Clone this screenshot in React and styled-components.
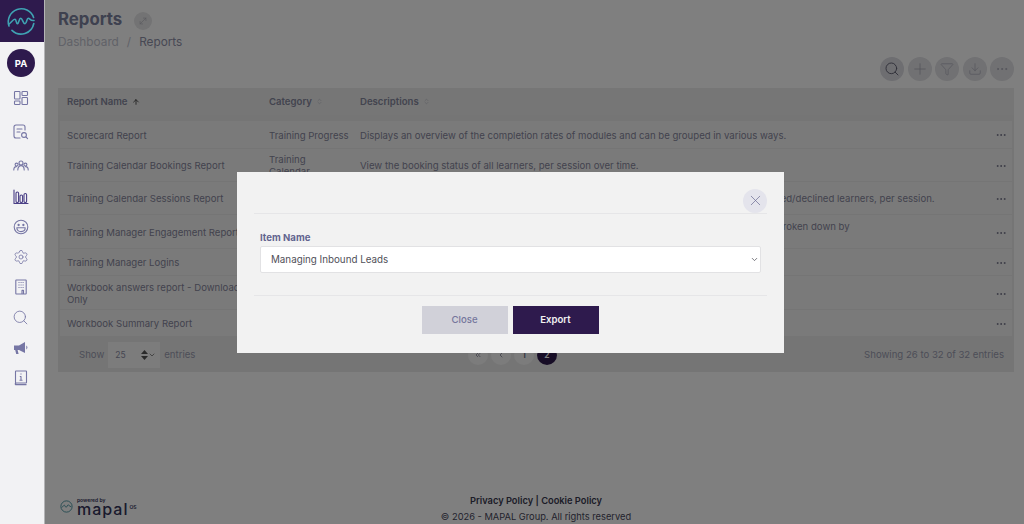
import React from 'react';
import styled, { createGlobalStyle } from 'styled-components';
import { Search, Plus, Funnel, Download, Ellipsis, MoveDiagonal, Settings, X, ChevronDown, ChevronLeft, ChevronsLeft, ArrowUp, ChevronsUpDown } from 'lucide-react';

const Global = createGlobalStyle`
  html, body { margin: 0; padding: 0; height: 100%; overflow: hidden; background: #fff; }
  body { font-family: Inter, "Open Sans", "Liberation Sans", sans-serif; }
  * { box-sizing: border-box; }
`;
const Page = styled.div`display: flex; width: 1024px; height: 524px; overflow: hidden;`;
const Side = styled.nav`
  position: relative; z-index: 20; flex: 0 0 45px; width: 45px; background: #f2f2f4;
  border-right: 1px solid #b4b4b6; display: flex; flex-direction: column; align-items: center;
`;
const LogoBox = styled.div`
  width: 44px; height: 42px; padding-right: 2px; background: #2e1a4d; display: flex; align-items: center; justify-content: center;
`;
const Avatar = styled.div`
  width: 28px; height: 28px; margin: 7px 2px 6px 0; border-radius: 50%; background: #2e1a4d; color: #fff;
  font-size: 9.5px; font-weight: 700; display: flex; align-items: center; justify-content: center;
`;
const NavItem = styled.div`
  height: ${p => p.$h || 30}px; margin-right: 3px; display: flex; align-items: center; justify-content: center; color: #7676a4;
`;
const Main = styled.main`
  flex: 1; min-width: 0; display: flex; flex-direction: column; padding: 10px 10px 0 13px; background: #fff;
`;
const TitleRow = styled.div`display: flex; align-items: center; gap: 12px; height: 18px;`;
const Title = styled.h1`margin: 0; font-size: 16.8px; line-height: 18px; font-weight: 700; color: #7c829f;`;
const Expander = styled.span`
  width: 18px; height: 18px; margin-top: 3px; border-radius: 50%; background: #e6e6e8; color: #b0b0b8; display: flex; align-items: center; justify-content: center;
`;
const Crumbs = styled.div`margin-top: 7px; font-size: 11.8px; line-height: 14px; color: #c2c4d0; display: flex; gap: 8px;`;
const CrumbNow = styled.span`color: #8e90a8;`;
const Tools = styled.div`display: flex; justify-content: flex-end; gap: 3.4px; margin-top: 8px; height: 24px;`;
const Tool = styled.button`
  width: 24px; height: 24px; padding: 0; border: 0; border-radius: 50%; background: ${p => p.$on ? '#dcdce2' : '#e2e2e6'};
  color: ${p => p.$on ? '#5e5e70' : '#a6a6b4'}; display: flex; align-items: center; justify-content: center;
`;
const Card = styled.section`margin-top: 7px; background: #ebebeb;`;
const HeadRow = styled.div`
  display: grid; grid-template-columns: 202px 91px 1fr; height: 27px; padding-left: 9px; background: #ececec; align-items: center;
  font-size: 9.6px; font-weight: 600; color: #86889e;
`;
const HeadCell = styled.span`display: flex; align-items: center; gap: 4px;`;
const Body = styled.div`margin: 5px 2px 0; background: #f5f5f5; border-top: 1px solid #ebebeb;`;
const Row = styled.div`
  display: grid; grid-template-columns: 202px 91px 1fr 17px; min-height: 27.6px; padding: 5.7px 0 3.7px 7px; align-items: center;
  border-bottom: 1px solid #ebebeb; font-size: 9.6px; line-height: 11.5px; color: #86869c;
`;
const NameCell = styled.span`padding-right: 16px;`;
const Desc = styled.span`white-space: pre-line;`;
const Dots = styled.span`color: #6f7088; display: flex;`;
const Foot = styled.div`
  display: flex; align-items: center; height: 35px; padding: 0 10px 0 21px; font-size: 9.6px; color: #9a9cb0;
`;
const Show = styled.div`flex: 0 0 389px; display: flex; align-items: center; gap: 4px;`;
const MiniSelect = styled.div`
  width: 52px; height: 26px; padding: 0 4px 0 7px; background: #f8f8f8; display: flex; align-items: center; justify-content: space-between; color: #8a8ca2; font-size: 8.5px;
`;
const MiniArrows = styled.span`display: flex; align-items: center; gap: 0; color: #555;`;
const Pager = styled.div`display: flex; gap: 3px;`;
const PageBtn = styled.span`
  width: 20px; height: 20px; border-radius: 50%; background: ${p => p.$on ? '#2e1a4d' : '#f8f8f8'}; color: ${p => p.$on ? '#fff' : '#6a6a80'};
  font-size: 8.5px; font-weight: 600; display: flex; align-items: center; justify-content: center;
`;
const Info = styled.span`margin-left: auto;`;
const Bottom = styled.footer`
  margin-top: auto; height: 31px; position: relative; display: flex; flex-direction: column; align-items: center;
  font-size: 9.3px; color: #46465a; line-height: 15.5px;
`;
const Strong = styled.div`font-weight: 600; color: #3a3a50;`;
const Brand = styled.div`
  position: absolute; left: 2px; top: 4px; display: flex; align-items: center; gap: 4px; color: #34345a;
`;
const BrandText = styled.div`display: flex; flex-direction: column; line-height: 1;`;
const Powered = styled.span`font-size: 5px; font-weight: 600; line-height: 6px;`;
const Mapal = styled.span`font-size: 16px; font-weight: 500; letter-spacing: 1px; line-height: 12px;`;
const Os = styled.sup`font-size: 5px; font-weight: 600; vertical-align: 6px; line-height: 0; letter-spacing: 0; margin-left: 1px;`;
const Overlay = styled.div`
  position: fixed; inset: 0; z-index: 10; background: rgba(0,0,0,.5); display: flex; align-items: center; justify-content: center; padding-right: 3px;
`;
const Modal = styled.div`width: 547px; height: 181px; background: #f2f2f2; padding: 0 17px; display: flex; flex-direction: column;`;
const ModalHead = styled.div`height: 42px; display: flex; justify-content: flex-end; align-items: flex-end; border-bottom: 1px solid #e6e6e8; padding-bottom: 0;`;
const CloseX = styled.button`
  width: 24px; height: 24px; padding: 0; border: 0; border-radius: 50%; background: #e4e4ec; color: #6a6a92; display: flex; align-items: center; justify-content: center;
`;
const ModalBody = styled.div`height: 82px; padding: 18px 6px 0; border-bottom: 1px solid #e6e6e8;`;
const Label = styled.div`font-size: 9.6px; line-height: 12px; font-weight: 700; color: #62648f; margin-bottom: 2px;`;
const Select = styled.div`
  height: 27px; background: #fff; border: 1px solid #e2e2e4; border-radius: 2px; padding: 0 1px 0 10px; display: flex; align-items: center; justify-content: space-between;
  font-size: 9.8px; color: #505058;
`;
const Actions = styled.div`display: flex; justify-content: center; gap: 5px; padding-top: 10px; padding-right: 1px;`;
const Btn = styled.button`
  width: 86px; height: 28px; border: 0; padding: 0; font: inherit; font-size: 9.6px; font-weight: ${p => p.$primary ? 600 : 500};
  background: ${p => p.$primary ? '#2e1a4d' : '#d1d1d9'}; color: ${p => p.$primary ? '#f2f2f2' : '#74769c'};
`;

const Logo = () => (
  <svg width="30" height="30" viewBox="0 0 30 30" fill="none" stroke="#3fa3b3" strokeWidth="1.6" strokeLinecap="round">
    <path d="M3 20A13 13 0 0 1 27.6 11.5" />
    <path d="M27.8 17.5A13 13 0 0 1 6 24.4" />
    <path d="M3 18C5 17 7 13 9 13.3 10.5 13.5 10 18 11.5 17.7 13 17.4 13 12.3 14.7 12.3 16.5 12.3 17 18 19 17.7 21 17.4 20.5 12.3 22.3 12.3 24 12.3 24 15 28 14.5" />
  </svg>
);
const Svg = ({ children, ...p }) => (
  <svg width="16" height="16" viewBox="0 0 16 16" fill="none" stroke="currentColor" strokeWidth="1.1" strokeLinecap="round" strokeLinejoin="round" {...p}>{children}</svg>
);
const Bars = () => (
  <Svg stroke="#4a3f86">
    <path d="M1 1v13.5h14" /><rect x="3" y="3" width="2.6" height="10.5" rx="1.3" /><rect x="7" y="6" width="2.6" height="7.5" rx="1.3" /><rect x="11" y="4.5" width="2.6" height="9" rx="1.3" />
  </Svg>
);
const ReportSearch = () => (
  <Svg>
    <path d="M7 14H3a2 2 0 0 1-2-2V3a2 2 0 0 1 2-2h7a2 2 0 0 1 2 2v3" /><path d="M4 5h5M4 8h3" /><circle cx="11" cy="11" r="2.4" /><path d="M13 13l1.6 1.6" />
  </Svg>
);
const Team = () => (
  <Svg>
    <circle cx="8" cy="5" r="2" /><path d="M4.8 12c0-2.6 1.4-4.4 3.2-4.4s3.2 1.8 3.2 4.4" />
    <circle cx="3.6" cy="6.6" r="1.5" /><path d="M.8 12c0-2 1-3.4 2.6-3.4" />
    <circle cx="12.4" cy="6.6" r="1.5" /><path d="M15.2 12c0-2-1-3.4-2.6-3.4" />
  </Svg>
);
const Grin = () => (
  <Svg>
    <circle cx="8" cy="8" r="6.8" /><circle cx="5.6" cy="6" r=".6" fill="currentColor" /><circle cx="10.4" cy="6" r=".6" fill="currentColor" />
    <path d="M3.8 8.8h8.4c0 2.4-1.8 3.8-4.2 3.8S3.8 11.2 3.8 8.8z" />
  </Svg>
);
const Office = () => (
  <Svg strokeLinecap="butt">
    <rect x="2.8" y="1" width="10.4" height="14" rx=".4" /><path d="M5.5 3.5h1M7.6 3.5h1M9.6 3.5h1M5.5 6h1M7.6 6h1M9.6 6h1M5.5 8.5h1M7.6 8.5h1M9.6 8.5h1" /><path d="M9 15v-3.6h1.5V15" />
  </Svg>
);
const Horn = () => (
  <svg width="16" height="16" viewBox="0 0 16 16" fill="currentColor"><path d="M1 5.5h5L12 2v11L6 10H4.6l1 4H3.2l-1-4H1z" /><path d="M13.3 5.5a2.4 2.4 0 0 1 0 4z" /></svg>
);
const BookInfo = () => (
  <Svg strokeLinecap="butt">
    <rect x="2.5" y="1" width="11" height="12" rx=".5" /><path d="M2.5 13v1.6h11" strokeWidth="1.4" /><path d="M6.8 6.5H8v3.6M6.5 10.2h3M8 3.6v1" />
  </Svg>
);
const Panels = () => (
  <Svg>
    <rect x="1.5" y="1.5" width="5.5" height="7.5" rx=".8" /><rect x="9" y="1.5" width="5.5" height="4" rx=".8" /><rect x="1.5" y="11" width="5.5" height="3.5" rx=".8" /><rect x="9" y="7.5" width="5.5" height="7" rx=".8" />
  </Svg>
);
const SortFilled = () => (
  <svg width="7" height="10" viewBox="0 0 7 10" fill="currentColor"><path d="M3.5 0L7 4H0zM3.5 10L0 6h7z" /></svg>
);

const rows = [
  ['Scorecard Report', ['Training Progress'], 'Displays an overview of the completion rates of modules and can be grouped in various ways.'],
  ['Training Calendar Bookings Report', ['Training', 'Calendar'], 'View the booking status of all learners, per session over time.'],
  ['Training Calendar Sessions Report', ['Training', 'Calendar'], 'View the number of booked and waitlisted places per session, alongside all attended, cancelled/declined learners, per session.'],
  ['Training Manager Engagement Report', ['Training', 'Manager'], 'Displays how often managers log in and complete the training tasks assigned to them each, broken down by\nlocation and period.'],
  ['Training Manager Logins', ['Training Manager'], 'Displays the logins of each training manager.'],
  ['Workbook answers report - Download Only', ['Workbooks'], 'Download the answers given in a workbook.'],
  ['Workbook Summary Report', ['Workbooks'], 'Displays a summary of all workbooks.'],
];

export default function App() {
  return (
    <Page>
      <Global />
      <Side>
        <LogoBox><Logo /></LogoBox>
        <Avatar>PA</Avatar>
        <NavItem $h={30}><Panels /></NavItem>
        <NavItem $h={38}><ReportSearch /></NavItem>
        <NavItem $h={30}><Team /></NavItem>
        <NavItem $h={32}><Bars /></NavItem>
        <NavItem $h={28}><Grin /></NavItem>
        <NavItem $h={31}><Settings size={16} strokeWidth={1.2} /></NavItem>
        <NavItem $h={30}><Office /></NavItem>
        <NavItem $h={30}><Search size={17} strokeWidth={1.2} /></NavItem>
        <NavItem $h={31}><Horn /></NavItem>
        <NavItem $h={30}><BookInfo /></NavItem>
      </Side>
      <Main>
        <TitleRow><Title>Reports</Title><Expander><MoveDiagonal size={10} strokeWidth={1.4} /></Expander></TitleRow>
        <Crumbs><span>Dashboard</span><span>/</span><CrumbNow>Reports</CrumbNow></Crumbs>
        <Tools>
          <Tool $on><Search size={16} strokeWidth={1.4} /></Tool>
          <Tool><Plus size={18} strokeWidth={1} /></Tool>
          <Tool><Funnel size={14} strokeWidth={1.1} /></Tool>
          <Tool><Download size={14} strokeWidth={1.1} /></Tool>
          <Tool><Ellipsis size={14} strokeWidth={1.4} /></Tool>
        </Tools>
        <Card>
          <HeadRow>
            <HeadCell>Report Name <ArrowUp size={8} strokeWidth={2.4} color="#333" /></HeadCell>
            <HeadCell>Category <ChevronsUpDown size={7} strokeWidth={1} /></HeadCell>
            <HeadCell>Descriptions <ChevronsUpDown size={7} strokeWidth={1} /></HeadCell>
          </HeadRow>
          <Body>
            {rows.map(([n, c, d]) => (
              <Row key={n}>
                <NameCell>{n}</NameCell>
                <span>{c.map((l, i) => <React.Fragment key={l}>{i > 0 && <br />}{l}</React.Fragment>)}</span>
                <Desc>{d}</Desc>
                <Dots><Ellipsis size={12} strokeWidth={1.8} /></Dots>
              </Row>
            ))}
          </Body>
          <Foot>
            <Show>Show <MiniSelect>25 <MiniArrows><SortFilled /><ChevronDown size={8} /></MiniArrows></MiniSelect> entries</Show>
            <Pager>
              <PageBtn><ChevronsLeft size={8} /></PageBtn>
              <PageBtn><ChevronLeft size={8} /></PageBtn>
              <PageBtn>1</PageBtn>
              <PageBtn $on>2</PageBtn>
            </Pager>
            <Info>Showing 26 to 32 of 32 entries</Info>
          </Foot>
        </Card>
        <Bottom>
          <Brand>
            <svg width="13" height="13" viewBox="0 0 30 30" fill="none" stroke="#3f8f9c" strokeWidth="2"><circle cx="15" cy="15" r="13" /><path d="M4 17c3-1 4-5 6-5s2 5 4 5 3-6 5-6 2 5 7 4" /></svg>
            <BrandText><Powered>powered by</Powered><Mapal>mapal<Os>OS</Os></Mapal></BrandText>
          </Brand>
          <Strong>Privacy Policy | Cookie Policy</Strong>
          <div>© 2026 - MAPAL Group. All rights reserved</div>
        </Bottom>
      </Main>
      <Overlay>
        <Modal>
          <ModalHead><CloseX aria-label="Close"><X size={17} strokeWidth={1} /></CloseX></ModalHead>
          <ModalBody>
            <Label>Item Name</Label>
            <Select>Managing Inbound Leads <ChevronDown size={9} /></Select>
          </ModalBody>
          <Actions>
            <Btn>Close</Btn>
            <Btn $primary>Export</Btn>
          </Actions>
        </Modal>
      </Overlay>
    </Page>
  );
}
